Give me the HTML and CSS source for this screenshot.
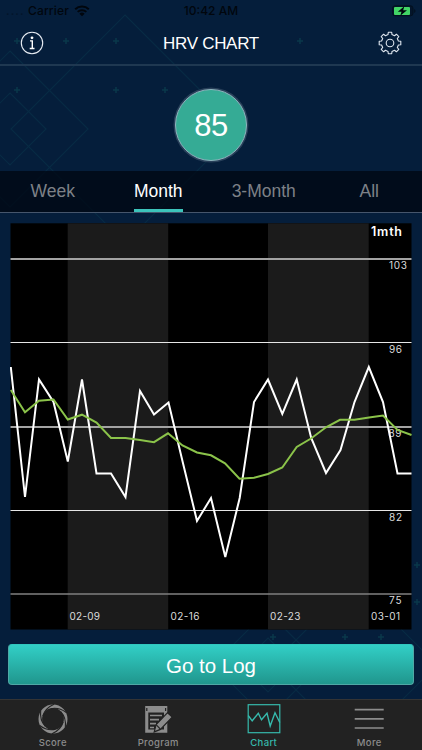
FILE: index.html
```
<!DOCTYPE html>
<html>
<head>
<meta charset="utf-8">
<title>HRV Chart</title>
<link rel="stylesheet" href="styles.css">
</head>
<body>
<div class="screen">

<!-- background pattern -->
<svg class="pattern" width="422" height="750" viewBox="0 0 422 750">
    <g class="diamonds">
        <path d="M125 15L239 129L125 243L11 129Z"/>
        <path d="M10 51L88 129L10 207L-68 129Z"/>
        <path d="M10 93L46 129L10 165L-26 129Z"/>
        <path d="M267 611L321 665L267 719L213 665Z"/>
        <path d="M268 638L295 665L268 692L241 665Z"/>
        <path d="M354 582L437 665L354 748L271 665Z"/>
    </g>
    <path class="stars" d="M17 38v6M14 41h6M66 38v6M63 41h6M116 38v6M113 41h6M300 38v6M297 41h6M17 87v6M14 90h6M116 87v6M113 90h6M165 87v6M162 90h6M273 634v6M270 637h6M345 634v6M342 637h6M381 634v6M378 637h6M417 562v6M414 565h6M417 599v6M414 602h6"/>
</svg>

<div class="status">
    <div class="carrier">
        <span class="dots">....</span>
        <span>Carrier</span>
        <svg width="16" height="12" viewBox="0 0 16 12">
            <path d="M1.2 4.3a9.8 9.8 0 0 1 13.6 0M3.7 6.9a6.2 6.2 0 0 1 8.6 0" fill="none" stroke="#01060d" stroke-width="2"/>
            <path d="M8 11.3L5.4 8.7a3.7 3.7 0 0 1 5.2 0z" fill="#01060d"/>
        </svg>
    </div>
    <div class="time">10:42 AM</div>
    <svg class="battery" width="24" height="12" viewBox="0 0 24 12">
        <rect x=".5" y=".8" width="20.5" height="10" rx="2.5" fill="#04152b" stroke="#03111f"/>
        <rect x="2" y="2" width="16" height="8" rx="1" fill="#42d566"/>
        <path d="M22.2 4v4q1.3-.5 1.3-2t-1.3-2z" fill="#03111f"/>
        <path d="M12.3 1.2L5.8 6.7h3.7L8.3 10.8L15 5.3h-3.8z" fill="#01060d"/>
    </svg>
</div>

<div class="header">
    <svg width="24" height="24" viewBox="0 0 24 24">
        <circle cx="12" cy="12" r="10.7" fill="none" stroke="#e8edf4" stroke-width="1.1"/>
        <circle cx="12" cy="6.8" r="1.4" fill="#fff"/>
        <path d="M10 9.9h2.3v7.2M9.7 17.5h4.8" fill="none" stroke="#fff" stroke-width="1.4"/>
    </svg>
    <h1>HRV CHART</h1>
    <svg width="24" height="24" viewBox="0 0 24 24">
        <g fill="none" stroke="#dfe6ef" stroke-width="1.1" stroke-linejoin="round">
            <path d="M10 3.6L10.3 1.2H13.7L14 3.6L16.5 4.7L18.4 3.2L20.8 5.6L19.3 7.5L20.4 10L22.8 10.3V13.7L20.4 14L19.3 16.5L20.8 18.4L18.4 20.8L16.5 19.3L14 20.4L13.7 22.8H10.3L10 20.4L7.5 19.3L5.6 20.8L3.2 18.4L4.7 16.5L3.6 14L1.2 13.7V10.3L3.6 10L4.7 7.5L3.2 5.6L5.6 3.2L7.5 4.7Z"/>
            <circle cx="12" cy="12" r="3.8"/>
        </g>
    </svg>
</div>

<div class="score">
    <div class="circle">85</div>
</div>

<div class="tabs">
    <div class="tab"><span>Week</span></div>
    <div class="tab active"><span>Month</span></div>
    <div class="tab"><span>3-Month</span></div>
    <div class="tab"><span>All</span></div>
</div>

<svg class="chart" width="402" height="407" viewBox="10 223 402 407">
    <rect x="10.5" y="223.3" width="401" height="406.2" fill="#000"/>
    <!-- every other week is lighter -->
    <rect x="67.7" y="223.3" width="100.5" height="406.2" fill="#1b1b1b"/>
    <rect x="268" y="223.3" width="100.7" height="406.2" fill="#1b1b1b"/>

    <g class="grid">
        <path d="M10.5 259H411.5" stroke="#a3a3a3" stroke-width="2"/>
        <path d="M10.5 342.5H411.5" stroke="#e6e6e6"/>
        <path d="M10.5 427H411.5" stroke="#a3a3a3" stroke-width="2"/>
        <path d="M10.5 510.5H411.5" stroke="#e6e6e6"/>
        <path d="M10.5 594H411.5" stroke="#808080" stroke-width="1.5"/>
    </g>

    <g class="labels">
        <text x="389" y="269" textLength="18">103</text>
        <text x="389" y="352.5" textLength="13">96</text>
        <text x="388.5" y="437" textLength="13">89</text>
        <text x="389" y="520.5" textLength="13">82</text>
        <text x="389" y="604" textLength="12.5">75</text>
        <text x="69.5" y="620" textLength="30.5">02-09</text>
        <text x="170.5" y="620" textLength="29">02-16</text>
        <text x="270" y="620" textLength="30.5">02-23</text>
        <text x="371" y="620" textLength="29">03-01</text>
        <text class="range" x="371" y="236" textLength="31">1mth</text>
    </g>

    <polyline class="daily" points="10.8,367 25,497 39,379.5 53.5,402 67.8,461.5 82,379.5 96.5,473.5 111,473.5 125.5,497 140,391 154,414.5 168.5,402.5 182.7,462 197,521 211,498 225.3,557 239.7,498 254,402 268,379.5 282.3,414 296.7,379.5 311.2,438 326,473 340.5,450 354.5,402 368.8,367 383,402 397.5,473.5 411.5,473.5"/>
    <polyline class="average" points="10.8,390 25,412.3 39,400.7 53.5,399.5 67.8,419.5 82,414.7 96.5,422.5 111,438 125.5,438 140,440 154,442.2 168,433.3 182.5,445.5 197,452.5 211,455.3 225,463.3 239.5,478.8 254,477.8 268,474 282.3,467.5 296.7,447 311,438.5 326,427.3 340,419.8 354.5,419.8 369,417.5 383,415.6 397.5,430 411.5,435"/>
</svg>

<div class="log">Go to Log</div>

<div class="menu">
    <div class="item">
        <svg width="32" height="32" viewBox="0 0 32 32">
            <circle cx="16" cy="16" r="12.7" fill="none" stroke="#8c8c8c" stroke-width="3.6"/>
            <!-- cuts the ring into six blades -->
            <g fill="none" stroke="#222" stroke-width="1.1">
                <path id="cut" d="M5.8 13Q8.2 5 17 1.2"/>
                <use href="#cut" transform="rotate(60 16 16)"/>
                <use href="#cut" transform="rotate(120 16 16)"/>
                <use href="#cut" transform="rotate(180 16 16)"/>
                <use href="#cut" transform="rotate(240 16 16)"/>
                <use href="#cut" transform="rotate(300 16 16)"/>
            </g>
        </svg>
        <span>Score</span>
    </div>
    <div class="item">
        <svg width="32" height="32" viewBox="0 0 32 32">
            <path d="M3.2 3H25.3V13.5L22 16.5V9.5H6.3V26.5H22V23l3.3-3.3V29.7H3.2z" fill="#8c8c8c"/>
            <path d="M4.8 5v3M23.6 5v3" stroke="#222" stroke-width="1.2"/>
            <path d="M8 12.5h12M8 16.7h9M8 20.7h6M8 24.5h4" stroke="#8c8c8c" stroke-width="1.7"/>
            <path d="M25.6 9.7l4.6 4.4L18.4 26.4l-6.2 2.5l1.9-7.2z" fill="#8c8c8c" stroke="#222" stroke-width="1.2"/>
            <path d="M14.3 21.8l4 4.2" stroke="#222" stroke-width="1.1"/>
        </svg>
        <span>Program</span>
    </div>
    <div class="item selected">
        <svg width="34" height="32" viewBox="0 0 34 32">
            <rect x="1.2" y="1.7" width="31.6" height="28" fill="none" stroke="#36b9ac" stroke-width="1.2"/>
            <path d="M1.2 12.5L5.2 17.8L11.3 10.2L14.5 16.8L20 10.2L23.2 23L28 9.8L32.8 19.5" fill="none" stroke="#36b9ac" stroke-width="1.4"/>
        </svg>
        <span>Chart</span>
    </div>
    <div class="item">
        <svg width="32" height="32" viewBox="0 0 32 32">
            <path d="M1.7 6.7h29M1.7 15.9h29M1.7 25h29" stroke="#8c8c8c" stroke-width="1.7"/>
        </svg>
        <span>More</span>
    </div>
</div>

</div>
</body>
</html>
```

FILE: styles.css
```
body {
    margin: 0;
    font-family: "Liberation Sans", Arial, sans-serif;
}

.screen {
    position: relative;
    width: 422px;
    height: 750px;
    overflow: hidden;
    display: flex;
    flex-direction: column;
    background-color: #051e3b;
    color: white;
}

/* lies under everything else */
.pattern {
    position: absolute;
    top: 0;
    left: 0;
}
.diamonds {
    fill: none;
    stroke: #082b44;
    stroke-width: 1.2;
}
.stars {
    stroke: #0a394b;
    stroke-width: 1.5;
}

.status, .header, .score, .tabs, .chart, .log, .menu {
    position: relative;
    flex-shrink: 0;
}

.status {
    height: 20px;
    display: grid;
    grid-template-columns: 1fr auto 1fr;
    align-items: center;
    color: #01060d;
    font-family: Inter, sans-serif;
    font-size: 12px;
    font-weight: 500;
    box-sizing: border-box;
    padding: 1px 6px 0 6px;
}
.carrier {
    display: flex;
    align-items: center;
    gap: 5px;
    letter-spacing: 0.15px;
}
.dots {
    width: 17px;
    opacity: 0.35;
    letter-spacing: 1px;
}
.battery {
    justify-self: end;
}

.header {
    height: 44px;
    display: flex;
    justify-content: space-between;
    align-items: center;
    border-bottom: 2px solid #1f3851;
    padding: 0 20px;
}
.header svg {
    margin-top: 2px;
}
.header h1 {
    margin: 3px 0 0 0;
    font-size: 17px;
    font-weight: normal;
    letter-spacing: -0.3px;
}

.score {
    height: 105px;
    display: flex;
    justify-content: center;
    align-items: center;
}
.circle {
    width: 70px;
    height: 70px;
    margin-top: 12px;
    border-radius: 50%;
    border: 1px solid #8fb4be;
    box-shadow: 0 0 0 1.5px #29405a;
    background-color: #35ab95;
    font-size: 31px;
    line-height: 71px;
    text-align: center;
    letter-spacing: -0.5px;
}

.tabs {
    height: 41px;
    display: flex;
    background-color: rgba(0, 7, 18, 0.75);
    border-bottom: 1px solid #46566c;
}
.tab {
    flex: 1;
    display: flex;
    justify-content: center;
    font-size: 17.5px;
    line-height: 40px;
    color: #7d8187;
}
.tab span {
    height: 38px;
}
.active {
    color: white;
}
.active span {
    border-bottom: 3px solid #3cc4bb;
}

.chart {
    display: block;
    margin: 10px 0 0 10px;
}
.labels {
    font-family: Inter, sans-serif;
    font-size: 10px;
    fill: #dcdcdc;
}
.labels .range {
    font-size: 12.5px;
    font-weight: 600;
    fill: white;
}
.daily {
    fill: none;
    stroke: white;
    stroke-width: 2;
}
.average {
    fill: none;
    stroke: #8bc34a;
    stroke-width: 2;
}

.log {
    height: 39px;
    margin: 14px 8px 0 8px;
    border: 1px solid #4fa8a5;
    border-top-color: #31c7be;
    border-radius: 4px;
    background: linear-gradient(#32cfc6, #20968d);
    font-size: 20.5px;
    line-height: 41px;
    text-align: center;
}

.menu {
    height: 50px;
    margin-top: 14px;
    border-top: 1px solid #343434;
    display: flex;
    background-color: #222222;
}
.item {
    flex: 1;
    display: flex;
    flex-direction: column;
    align-items: center;
    padding-top: 3px;
    font-family: Inter, sans-serif;
    font-size: 9.5px;
    font-weight: 500;
    line-height: 15px;
    letter-spacing: 0.35px;
    color: #8c8c8c;
}
.selected {
    color: #36b9ac;
}
```
